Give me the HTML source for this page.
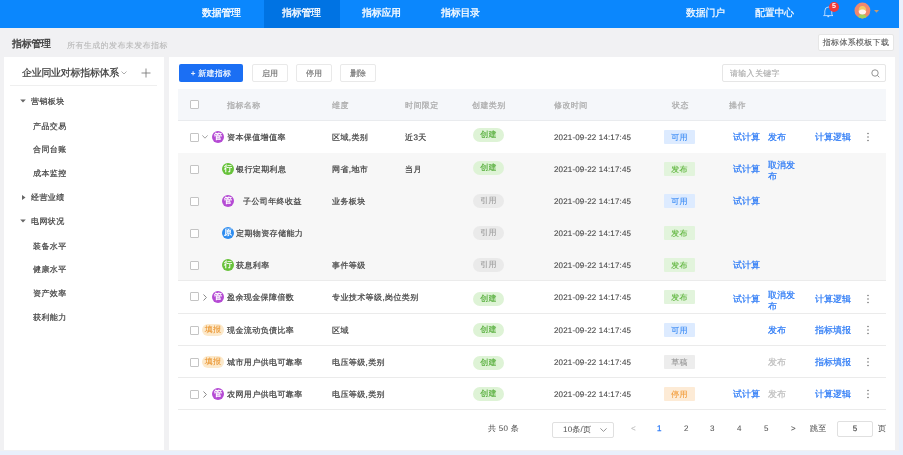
<!DOCTYPE html>
<html><head><meta charset="utf-8">
<style>
*{box-sizing:border-box;margin:0;padding:0}
html,body{text-rendering:geometricPrecision;-webkit-text-stroke:0.22px;width:903px;height:455px;overflow:hidden;background:#e9f0fc;font-family:"Liberation Sans",sans-serif;color:#333}
.a{position:absolute;white-space:nowrap}
#page{will-change:transform;position:absolute;left:0;top:0;width:899px;height:451px;background:#f1f1f3}
#hdr{position:absolute;left:0;top:0;width:899px;height:28px;background:#0b87fd}
.nav{-webkit-text-stroke:0.3px;position:absolute;top:0;height:28px;line-height:28px;color:#fff;font-size:10px;letter-spacing:-0.3px}
.panel{position:absolute;background:#fff}
.btn{position:absolute;top:64px;height:18px;border:1px solid #e9e9e9;border-radius:2px;background:#fff;font-size:8px;line-height:17px;text-align:center;color:#666;-webkit-text-stroke:0.1px}
.cb{position:absolute;width:9px;height:9px;border:1px solid #c4c4c4;border-radius:1px;background:#fff}
.rowbg{position:absolute;left:178px;width:708px}
.sep{position:absolute;left:178px;width:708px;height:1px;background:#ebebeb}
.cell{position:absolute;line-height:12px;font-size:8px;letter-spacing:0.4px;color:#454545;white-space:nowrap}
.pill{-webkit-text-stroke:0.15px;position:absolute;width:31px;height:14px;border-radius:7px;font-size:8px;line-height:14px;text-align:center;letter-spacing:0.3px}
.tag{-webkit-text-stroke:0.12px;position:absolute;width:31px;height:14px;border-radius:1px;font-size:8px;line-height:15px;text-align:center;letter-spacing:0.3px}
.ic{-webkit-text-stroke:0;position:absolute;width:12px;height:12px;border-radius:6px;color:#fff;font-size:8px;line-height:12px;text-align:center;font-weight:bold}
.lk{position:absolute;font-size:9px;letter-spacing:0px;color:#2f7cf6;white-space:nowrap}
.side{position:absolute;font-size:8px;letter-spacing:0.4px;color:#454545;white-space:nowrap;line-height:12px}
.pg{position:absolute;font-size:8px;line-height:12px;color:#555;white-space:nowrap;-webkit-text-stroke:0.05px}
</style></head><body>
<div id="page">
<div id="hdr">
<div class="a" style="left:264px;top:0;width:76px;height:28px;background:#0073e3"></div>
<div class="nav" style="left:202px">数据管理</div>
<div class="nav" style="left:282px">指标管理</div>
<div class="nav" style="left:362px">指标应用</div>
<div class="nav" style="left:441px">指标目录</div>
<div class="nav" style="left:686px;-webkit-text-stroke:0.2px">数据门户</div>
<div class="nav" style="left:755px;-webkit-text-stroke:0.2px">配置中心</div>
<svg class="a" style="left:822px;top:4px" width="14" height="14" viewBox="0 0 14 14"><path d="M2.8 10.6 V7 Q2.8 3.2 6.3 3 Q9.8 3.2 9.8 7 V10.6 L11 11.6 H1.6 Z" fill="none" stroke="#dbeaff" stroke-width="0.9" stroke-linejoin="round" opacity="0.9"/><path d="M5.4 12.6 H7.2" stroke="#dbeaff" stroke-width="1.1" opacity="0.9"/></svg>
<div class="a" style="left:829px;top:2px;width:10px;height:10px;border-radius:5px;background:#ef3b3b;color:#fff;font-size:7px;line-height:10px;text-align:center;font-weight:bold;-webkit-text-stroke:0">5</div>
<svg class="a" style="left:854px;top:2px" width="17" height="17" viewBox="0 0 17 17"><defs><clipPath id="avc"><circle cx="8.4" cy="8.5" r="7.9"/></clipPath></defs><circle cx="8.4" cy="8.5" r="7.9" fill="#f0886e"/><g clip-path="url(#avc)"><path d="M3.8 17 Q3.8 12.3 8.4 12 Q13 12.3 13 17Z" fill="#a3d05c"/><ellipse cx="8.4" cy="9.6" rx="3.7" ry="3" fill="#fff2ee"/><path d="M4.7 9.2 Q4.5 4.1 8.4 4.1 Q12.3 4.1 12.1 9.2 Q11 7.2 8.4 7.6 Q5.8 7.2 4.7 9.2Z" fill="#f3c862"/></g></svg>
<svg class="a" style="left:874px;top:9.5px" width="5" height="3" viewBox="0 0 5 3"><path d="M0 0 H5 L2.5 2.8Z" fill="#c49a72"/></svg>
</div>
<div class="a" style="left:12px;top:39px;font-size:10px;-webkit-text-stroke:0.35px;color:#3a3a3a;line-height:12px;letter-spacing:-0.3px">指标管理</div>
<div class="a" style="left:67px;top:40px;font-size:8px;color:#b9b9b9;line-height:12px;letter-spacing:0.4px;-webkit-text-stroke:0.1px">所有生成的发布未发布指标</div>
<div class="a" style="left:818px;top:34px;width:76px;height:17px;background:#fff;border:1px solid #e6e6e6;border-radius:2px;font-size:8px;line-height:16px;text-align:center;color:#5a5a5a;letter-spacing:0.3px;-webkit-text-stroke:0.1px">指标体系模板下载</div>
<div class="panel" style="left:4px;top:57px;width:160px;height:393px"></div>
<div class="panel" style="left:169px;top:57px;width:726px;height:393px"></div>
<div class="a" style="left:22px;top:68px;font-size:10px;line-height:12px;color:#3a3a3a;letter-spacing:-0.3px">企业同业对标指标体系</div>
<svg class="a" style="left:121px;top:71px" width="6" height="4" viewBox="0 0 6 4"><path d="M0.5 0.5 L3 3 L5.5 0.5" fill="none" stroke="#999" stroke-width="0.8"/></svg>
<svg class="a" style="left:141px;top:68px" width="10" height="10" viewBox="0 0 10 10"><path d="M5 0.5 V9.5 M0.5 5 H9.5" stroke="#777" stroke-width="0.85"/></svg>
<div class="a" style="left:10px;top:85px;width:147px;height:1px;background:#efefef"></div>
<svg class="a" style="left:20px;top:99px" width="6" height="4" viewBox="0 0 6 4"><path d="M0.2 0.6 H5.8 L3 3.4Z" fill="#666"/></svg>
<div class="side" style="left:31px;top:96px">营销板块</div>
<div class="side" style="left:33px;top:121px">产品交易</div>
<div class="side" style="left:33px;top:144px">合同台账</div>
<div class="side" style="left:33px;top:168px">成本监控</div>
<svg class="a" style="left:22px;top:195px" width="4" height="5" viewBox="0 0 4 5"><path d="M0 0 V5 L3.5 2.5Z" fill="#666"/></svg>
<div class="side" style="left:31px;top:192px">经营业绩</div>
<svg class="a" style="left:20px;top:219px" width="6" height="4" viewBox="0 0 6 4"><path d="M0.2 0.6 H5.8 L3 3.4Z" fill="#666"/></svg>
<div class="side" style="left:31px;top:216px">电网状况</div>
<div class="side" style="left:33px;top:241px">装备水平</div>
<div class="side" style="left:33px;top:264px">健康水平</div>
<div class="side" style="left:33px;top:288px">资产效率</div>
<div class="side" style="left:33px;top:312px">获利能力</div>
<div class="a" style="left:179px;top:64px;width:64px;height:18px;background:#1b6ff4;border-radius:2px;color:#fff;font-size:8px;line-height:19px;text-align:center;letter-spacing:0.3px;-webkit-text-stroke:0.15px">+ 新建指标</div>
<div class="btn" style="left:252px;width:36px">启用</div>
<div class="btn" style="left:296px;width:36px">停用</div>
<div class="btn" style="left:340px;width:36px">删除</div>
<div class="a" style="left:722px;top:64px;width:164px;height:18px;border:1px solid #e6e6e6;border-radius:2px;background:#fff"></div>
<div class="a" style="left:730px;top:68px;font-size:8px;line-height:12px;color:#aaa;letter-spacing:0.3px;-webkit-text-stroke:0.1px">请输入关键字</div>
<svg class="a" style="left:871px;top:69px" width="9" height="9" viewBox="0 0 9 9"><circle cx="4" cy="4" r="3.2" fill="none" stroke="#888" stroke-width="0.9"/><path d="M6.4 6.4 L8.3 8.3" stroke="#888" stroke-width="0.9"/></svg>
<div class="rowbg" style="top:89px;height:31px;background:#f5f7fa"></div>
<div class="sep" style="top:120px;background:#e9ebee"></div>
<div class="cb" style="left:190px;top:100px"></div>
<div class="cell" style="left:227px;top:100px;color:#aaa">指标名称</div>
<div class="cell" style="left:332px;top:100px;color:#aaa">维度</div>
<div class="cell" style="left:405px;top:100px;color:#aaa">时间限定</div>
<div class="cell" style="left:472px;top:100px;color:#aaa">创建类别</div>
<div class="cell" style="left:554px;top:100px;color:#aaa">修改时间</div>
<div class="cell" style="left:672px;top:100px;color:#aaa">状态</div>
<div class="cell" style="left:729px;top:100px;color:#aaa">操作</div>
<div class="cb" style="left:190px;top:133px"></div>
<svg class="a" style="left:202px;top:135px" width="6" height="4" viewBox="0 0 6 4"><path d="M0.4 0.4 L3 3.2 L5.6 0.4" fill="none" stroke="#999" stroke-width="0.9"/></svg>
<div class="ic" style="left:212px;top:131px;background:#b54bd4">管</div>
<div class="cell" style="left:227px;top:132px">资本保值增值率</div>
<div class="cell" style="left:332px;top:132px">区域,类别</div>
<div class="cell" style="left:405px;top:132px">近3天</div>
<div class="pill" style="left:473px;top:128px;background:#def3d6;color:#55ad3a">创建</div>
<div class="cell" style="left:554px;top:132px;letter-spacing:0.15px;-webkit-text-stroke:0.1px">2021-09-22 14:17:45</div>
<div class="tag" style="left:664px;top:130px;background:#ddebff;color:#3b8cf5">可用</div>
<div class="lk" style="left:733px;top:131px;line-height:12px;color:#2f7cf6">试计算</div>
<div class="lk" style="left:768px;top:131px;line-height:12px;color:#2f7cf6">发布</div>
<div class="lk" style="left:815px;top:131px;line-height:12px;color:#2f7cf6">计算逻辑</div>
<svg class="a" style="left:866px;top:131px" width="4" height="12" viewBox="0 0 4 12"><circle cx="2" cy="2.5" r="0.8" fill="#777"/><circle cx="2" cy="6" r="0.8" fill="#777"/><circle cx="2" cy="9.5" r="0.8" fill="#777"/></svg>
<div class="rowbg" style="top:153px;height:32px;background:#f7f7f7"></div>
<div class="cb" style="left:190px;top:165px"></div>
<div class="ic" style="left:222px;top:163px;background:#67c23a">行</div>
<div class="cell" style="left:236px;top:164px">银行定期利息</div>
<div class="cell" style="left:332px;top:164px">网省,地市</div>
<div class="cell" style="left:405px;top:164px">当月</div>
<div class="pill" style="left:473px;top:161px;background:#def3d6;color:#55ad3a">创建</div>
<div class="cell" style="left:554px;top:164px;letter-spacing:0.15px;-webkit-text-stroke:0.1px">2021-09-22 14:17:45</div>
<div class="tag" style="left:664px;top:162px;background:#e2f4dc;color:#5fb53d">发布</div>
<div class="lk" style="left:733px;top:163px;line-height:12px;color:#2f7cf6">试计算</div>
<div class="lk" style="left:768px;top:160px;line-height:11px">取消发<br>布</div>
<div class="rowbg" style="top:185px;height:32px;background:#f7f7f7"></div>
<div class="cb" style="left:190px;top:197px"></div>
<div class="ic" style="left:222px;top:195px;background:#b54bd4">管</div>
<div class="cell" style="left:243px;top:196px">子公司年终收益</div>
<div class="cell" style="left:332px;top:196px">业务板块</div>
<div class="pill" style="left:473px;top:194px;background:#eaeaea;color:#a0a0a0">引用</div>
<div class="cell" style="left:554px;top:196px;letter-spacing:0.15px;-webkit-text-stroke:0.1px">2021-09-22 14:17:45</div>
<div class="tag" style="left:664px;top:194px;background:#ddebff;color:#3b8cf5">可用</div>
<div class="lk" style="left:733px;top:195px;line-height:12px;color:#2f7cf6">试计算</div>
<div class="rowbg" style="top:217px;height:32px;background:#f7f7f7"></div>
<div class="cb" style="left:190px;top:229px"></div>
<div class="ic" style="left:222px;top:227px;background:#2d8cf0">原</div>
<div class="cell" style="left:236px;top:228px">定期物资存储能力</div>
<div class="pill" style="left:473px;top:226px;background:#eaeaea;color:#a0a0a0">引用</div>
<div class="cell" style="left:554px;top:228px;letter-spacing:0.15px;-webkit-text-stroke:0.1px">2021-09-22 14:17:45</div>
<div class="tag" style="left:664px;top:226px;background:#e2f4dc;color:#5fb53d">发布</div>
<div class="rowbg" style="top:249px;height:31px;background:#f7f7f7"></div>
<div class="sep" style="top:280px"></div>
<div class="cb" style="left:190px;top:261px"></div>
<div class="ic" style="left:222px;top:259px;background:#67c23a">行</div>
<div class="cell" style="left:236px;top:260px">获息利率</div>
<div class="cell" style="left:332px;top:260px">事件等级</div>
<div class="pill" style="left:473px;top:258px;background:#eaeaea;color:#a0a0a0">引用</div>
<div class="cell" style="left:554px;top:260px;letter-spacing:0.15px;-webkit-text-stroke:0.1px">2021-09-22 14:17:45</div>
<div class="tag" style="left:664px;top:258px;background:#e2f4dc;color:#5fb53d">发布</div>
<div class="lk" style="left:733px;top:259px;line-height:12px;color:#2f7cf6">试计算</div>
<div class="sep" style="top:313px"></div>
<div class="cb" style="left:190px;top:292px"></div>
<svg class="a" style="left:203px;top:294px" width="4" height="7" viewBox="0 0 4 7"><path d="M0.5 0.5 L3.4 3.5 L0.5 6.5" fill="none" stroke="#888" stroke-width="1"/></svg>
<div class="ic" style="left:212px;top:291px;background:#b54bd4">管</div>
<div class="cell" style="left:227px;top:292px">盈余现金保障倍数</div>
<div class="cell" style="left:332px;top:292px">专业技术等级,岗位类别</div>
<div class="pill" style="left:473px;top:292px;background:#def3d6;color:#55ad3a">创建</div>
<div class="cell" style="left:554px;top:292px;letter-spacing:0.15px;-webkit-text-stroke:0.1px">2021-09-22 14:17:45</div>
<div class="tag" style="left:664px;top:290px;background:#e2f4dc;color:#5fb53d">发布</div>
<div class="lk" style="left:733px;top:293px;line-height:12px;color:#2f7cf6">试计算</div>
<div class="lk" style="left:768px;top:290px;line-height:11px">取消发<br>布</div>
<div class="lk" style="left:815px;top:293px;line-height:12px;color:#2f7cf6">计算逻辑</div>
<svg class="a" style="left:866px;top:293px" width="4" height="12" viewBox="0 0 4 12"><circle cx="2" cy="2.5" r="0.8" fill="#777"/><circle cx="2" cy="6" r="0.8" fill="#777"/><circle cx="2" cy="9.5" r="0.8" fill="#777"/></svg>
<div class="sep" style="top:345px"></div>
<div class="cb" style="left:190px;top:326px"></div>
<div class="a" style="left:202px;top:324px;width:22px;height:12px;border-radius:6px;background:#fce9cb;color:#ea9632;font-size:8px;line-height:12px;text-align:center;letter-spacing:0.3px;-webkit-text-stroke:0.1px">填报</div>
<div class="cell" style="left:227px;top:325px">现金流动负债比率</div>
<div class="cell" style="left:332px;top:325px">区域</div>
<div class="pill" style="left:473px;top:323px;background:#def3d6;color:#55ad3a">创建</div>
<div class="cell" style="left:554px;top:325px;letter-spacing:0.15px;-webkit-text-stroke:0.1px">2021-09-22 14:17:45</div>
<div class="tag" style="left:664px;top:323px;background:#ddebff;color:#3b8cf5">可用</div>
<div class="lk" style="left:768px;top:324px;line-height:12px;color:#2f7cf6">发布</div>
<div class="lk" style="left:815px;top:324px;line-height:12px;color:#2f7cf6">指标填报</div>
<svg class="a" style="left:866px;top:324px" width="4" height="12" viewBox="0 0 4 12"><circle cx="2" cy="2.5" r="0.8" fill="#777"/><circle cx="2" cy="6" r="0.8" fill="#777"/><circle cx="2" cy="9.5" r="0.8" fill="#777"/></svg>
<div class="sep" style="top:377px"></div>
<div class="cb" style="left:190px;top:358px"></div>
<div class="a" style="left:202px;top:356px;width:22px;height:12px;border-radius:6px;background:#fce9cb;color:#ea9632;font-size:8px;line-height:12px;text-align:center;letter-spacing:0.3px;-webkit-text-stroke:0.1px">填报</div>
<div class="cell" style="left:227px;top:357px">城市用户供电可靠率</div>
<div class="cell" style="left:332px;top:357px">电压等级,类别</div>
<div class="pill" style="left:473px;top:356px;background:#def3d6;color:#55ad3a">创建</div>
<div class="cell" style="left:554px;top:357px;letter-spacing:0.15px;-webkit-text-stroke:0.1px">2021-09-22 14:17:45</div>
<div class="tag" style="left:664px;top:355px;background:#ededed;color:#9a9a9a">草稿</div>
<div class="lk" style="left:768px;top:356px;line-height:12px;color:#c0c0c0">发布</div>
<div class="lk" style="left:815px;top:356px;line-height:12px;color:#2f7cf6">指标填报</div>
<svg class="a" style="left:866px;top:356px" width="4" height="12" viewBox="0 0 4 12"><circle cx="2" cy="2.5" r="0.8" fill="#777"/><circle cx="2" cy="6" r="0.8" fill="#777"/><circle cx="2" cy="9.5" r="0.8" fill="#777"/></svg>
<div class="sep" style="top:409px"></div>
<div class="cb" style="left:190px;top:390px"></div>
<svg class="a" style="left:203px;top:391px" width="4" height="7" viewBox="0 0 4 7"><path d="M0.5 0.5 L3.4 3.5 L0.5 6.5" fill="none" stroke="#888" stroke-width="1"/></svg>
<div class="ic" style="left:212px;top:388px;background:#b54bd4">管</div>
<div class="cell" style="left:227px;top:389px">农网用户供电可靠率</div>
<div class="cell" style="left:332px;top:389px">电压等级,类别</div>
<div class="pill" style="left:473px;top:387px;background:#def3d6;color:#55ad3a">创建</div>
<div class="cell" style="left:554px;top:389px;letter-spacing:0.15px;-webkit-text-stroke:0.1px">2021-09-22 14:17:45</div>
<div class="tag" style="left:664px;top:387px;background:#fdebd6;color:#f29b38">停用</div>
<div class="lk" style="left:733px;top:388px;line-height:12px;color:#2f7cf6">试计算</div>
<div class="lk" style="left:768px;top:388px;line-height:12px;color:#c0c0c0">发布</div>
<div class="lk" style="left:815px;top:388px;line-height:12px;color:#2f7cf6">计算逻辑</div>
<svg class="a" style="left:866px;top:388px" width="4" height="12" viewBox="0 0 4 12"><circle cx="2" cy="2.5" r="0.8" fill="#777"/><circle cx="2" cy="6" r="0.8" fill="#777"/><circle cx="2" cy="9.5" r="0.8" fill="#777"/></svg>
<div class="pg" style="left:488px;top:423px;letter-spacing:0.3px">共 50 条</div>
<div class="a" style="left:552px;top:422px;width:62px;height:16px;border:1px solid #e0e0e0;border-radius:2px;background:#fff"></div>
<div class="pg" style="left:563px;top:424px;letter-spacing:0.2px">10条/页</div>
<svg class="a" style="left:600px;top:428px" width="7" height="4" viewBox="0 0 7 4"><path d="M0.4 0.4 L3.5 3.4 L6.6 0.4" fill="none" stroke="#888" stroke-width="0.9"/></svg>
<div class="pg" style="left:631px;top:423px;color:#bbb">&lt;</div>
<div class="pg" style="left:657px;top:423px;color:#2f7cf6;-webkit-text-stroke:0.3px">1</div>
<div class="pg" style="left:684px;top:423px">2</div>
<div class="pg" style="left:710px;top:423px">3</div>
<div class="pg" style="left:737px;top:423px">4</div>
<div class="pg" style="left:764px;top:423px">5</div>
<div class="pg" style="left:791px;top:423px">&gt;</div>
<div class="pg" style="left:810px;top:423px;letter-spacing:0.3px">跳至</div>
<div class="a" style="left:837px;top:421px;width:36px;height:16px;border:1px solid #e0e0e0;border-radius:2px;background:#fff;font-size:8px;line-height:14px;text-align:center;color:#555">5</div>
<div class="pg" style="left:878px;top:423px">页</div>
</div>
</body></html>
